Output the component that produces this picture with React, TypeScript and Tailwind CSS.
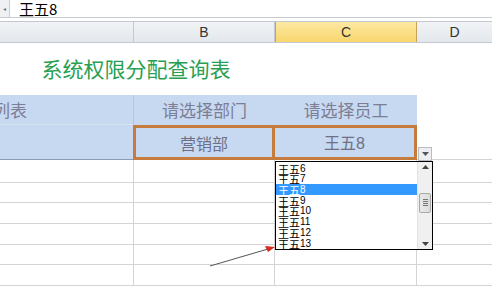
import React from 'react';

const cjk = { fontFamily: '"Noto Sans CJK SC", "Noto Sans", sans-serif' };

const items = ['6', '7', '8', '9', '10', '11', '12', '13'];

const GridRow: React.FC<{ h: string }> = ({ h }) => (
  <div className={`flex ${h} border-b border-[#d4d4d4]`}>
    <div className="w-[134px] border-r border-[#d4d4d4]" />
    <div className="w-[141px] border-r border-[#d4d4d4]" />
    <div className="w-[142px] border-r border-[#d4d4d4]" />
    <div className="flex-1" />
  </div>
);

const App: React.FC = () => {
  return (
    <div className="relative w-[492px] h-[286px] overflow-hidden bg-white" style={cjk}>
      {/* formula bar */}
      <div className="flex h-[18px] border-b border-[#c8ccd2]">
        <div className="w-[10px] bg-[#eef0f3] border-r border-[#c8ccd2] flex items-center justify-center text-[6px] text-[#777]">◂</div>
        <div className="pl-[9px] text-[15px] leading-[17px] text-black">王五8</div>
      </div>
      <div className="h-[3px] bg-white" />

      {/* column headers */}
      <div className="flex h-[22px] text-[14px] text-[#333] border-y border-[#c3c9d2] bg-gradient-to-b from-[#f1f3f6] to-[#e3e7ec]" style={{ fontFamily: '"Liberation Sans", sans-serif' }}>
        <div className="w-[134px] border-r border-[#c3c9d2]" />
        <div className="w-[141px] border-r border-[#c3c9d2] flex items-center justify-center">B</div>
        <div className="w-[142px] border-x border-[#c9a35a] bg-gradient-to-b from-[#fde9a2] to-[#f9d66d] flex items-center justify-center">C</div>
        <div className="flex-1 flex items-center justify-center">D</div>
      </div>

      {/* title row */}
      <div className="h-[52px] flex items-center">
        <div className="w-[272px] flex justify-center text-[21px] text-[#2a9f52]">系统权限分配查询表</div>
      </div>

      {/* blue header row */}
      <div className="flex h-[30px] text-[17px] text-[#7d7e96]">
        <div className="w-[134px] bg-[#c6d9f0] border-r border-[#b3c5dc] border-b border-b-[#d6e2f2] overflow-hidden flex items-center">
          <span className="-ml-[7px] whitespace-nowrap">列表</span>
        </div>
        <div className="w-[141px] bg-[#c6d9f0] flex items-center justify-center">请选择部门</div>
        <div className="w-[142px] bg-[#c6d9f0] flex items-center justify-center">请选择员工</div>
        <div className="flex-1" />
      </div>

      {/* selection row */}
      <div className="flex h-[35px] text-[16px] text-[#6f7088]">
        <div className="w-[133px] bg-[#c6d9f0] border-b border-[#8c9bb3]" />
        <div className="w-[142px] bg-[#c6d9f0] border-[3px] border-[#c47b3c] flex items-center justify-center">营销部</div>
        <div className="w-[142px] bg-[#c6d9f0] border-[3px] border-l-0 border-[#c47b3c] flex items-center justify-center">
          <span>王五<span style={{ fontFamily: '"Liberation Sans", sans-serif' }}>8</span></span>
        </div>
        <div className="flex-1 border-b border-[#d4d4d4]" />
      </div>

      {/* grid rows */}
      <GridRow h="h-[23px]" />
      <GridRow h="h-[20px]" />
      <GridRow h="h-[21px]" />
      <GridRow h="h-[21px]" />
      <GridRow h="h-[20px]" />
      <GridRow h="h-[21px]" />

      {/* dropdown button */}
      <div className="absolute left-[418px] top-[147px] w-[14px] h-[14px] bg-[#eceef1] border border-[#b9bcc2] flex items-center justify-center">
        <svg width="7" height="5" viewBox="0 0 7 5"><path d="M0 0h7L3.5 4z" fill="#555" /></svg>
      </div>

      {/* list box */}
      <div className="absolute left-[275px] top-[161px] w-[158px] h-[89px] bg-white border border-black flex">
        <div className="flex-1 flex flex-col pt-[1px]">
          {items.map((n) => (
            <div
              key={n}
              className={`h-[10.7px] flex items-end pl-[2px] leading-[10px] ${n === '8' ? 'bg-[#3399ff] text-white' : 'text-black'}`}
            >
              <span className="text-[11px] leading-[10px]">王五</span>
              <span className="text-[10px] leading-[10px]" style={{ fontFamily: '"Liberation Sans", sans-serif' }}>{n}</span>
            </div>
          ))}
        </div>
        <div className="w-[15px] bg-[#f0f0f0] border-l border-[#e3e3e3] flex flex-col items-center justify-between py-[3px]">
          <svg width="7" height="4" viewBox="0 0 7 4"><path d="M0 4h7L3.5 0z" fill="#444" /></svg>
          <div className="w-[12px] h-[20px] -mt-[6px] bg-gradient-to-r from-[#e9e9e9] to-[#dcdcdc] border border-[#a8a8a8] rounded-[2px] flex flex-col items-center justify-center gap-[1px]">
            <div className="w-[5px] h-px bg-[#777]" />
            <div className="w-[5px] h-px bg-[#777]" />
            <div className="w-[5px] h-px bg-[#777]" />
            <div className="w-[5px] h-px bg-[#777]" />
          </div>
          <svg width="7" height="4" viewBox="0 0 7 4"><path d="M0 0h7L3.5 4z" fill="#444" /></svg>
        </div>
      </div>

      {/* annotation arrow */}
      <svg className="absolute left-0 top-0 pointer-events-none" width="492" height="286">
        <line x1="210" y1="266" x2="268" y2="249" stroke="#555" strokeWidth="1" />
        <path d="M275 247 L265 246 L268 252 Z" fill="#d42a1e" />
      </svg>
    </div>
  );
};

export default App;
